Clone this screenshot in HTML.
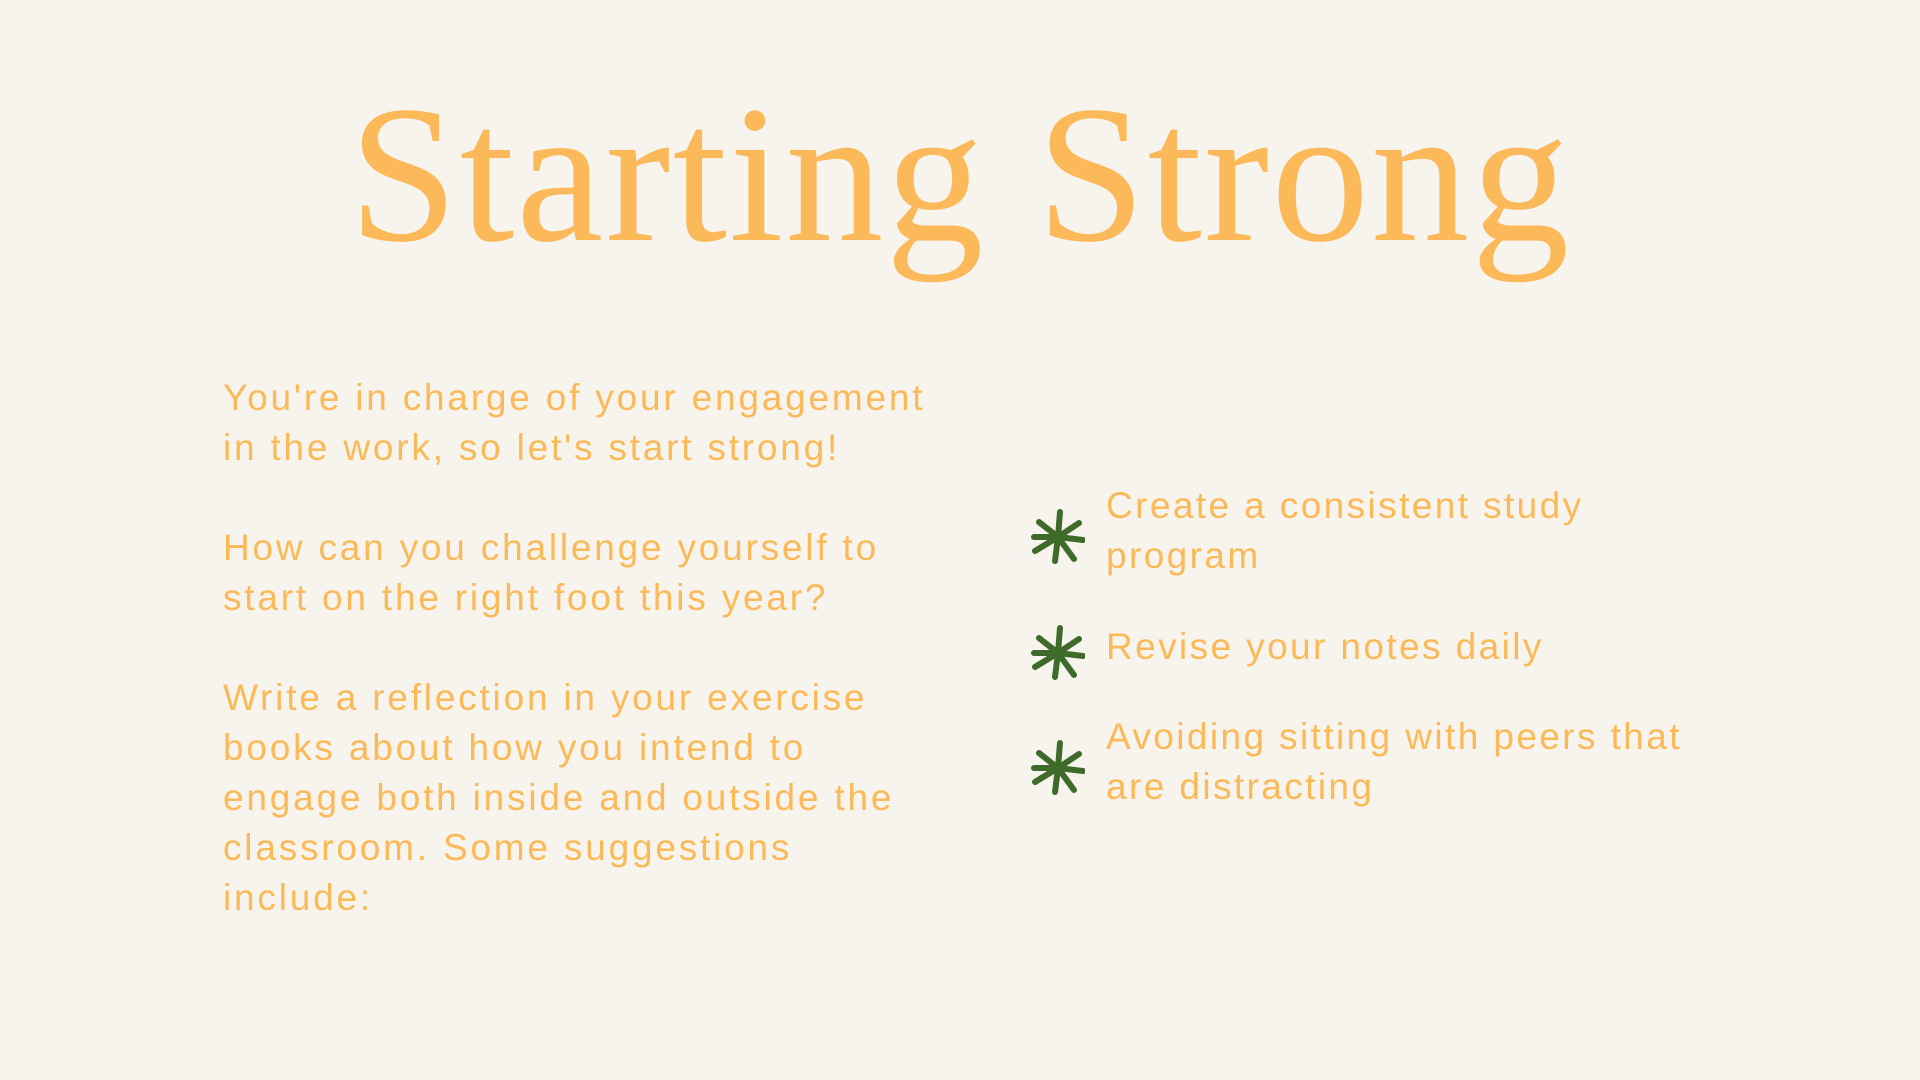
<!DOCTYPE html>
<html><head><meta charset="utf-8"><style>
html,body{margin:0;padding:0;}
body{width:1920px;height:1080px;background:#F7F4EE;position:relative;overflow:hidden;font-family:"Liberation Sans",sans-serif;color:#FBB957;}
.title{position:absolute;left:0;width:1920px;top:50px;text-align:center;font-family:"Liberation Serif",serif;font-size:196px;line-height:250px;color:#FCB95A;letter-spacing:2px;}
.left{position:absolute;left:223px;top:373px;font-size:37px;line-height:50px;white-space:nowrap;letter-spacing:2.8px;}
.item{position:absolute;left:1106px;font-size:37px;line-height:50px;white-space:nowrap;letter-spacing:2.4px;}
.star{position:absolute;width:54px;height:58px;}
</style></head><body>
<div class="title">Starting Strong</div>
<div class="left">You're in charge of your engagement<br>in the work, so let's start strong!<br><br>How can you challenge yourself to<br>start on the right foot this year?<br><br>Write a reflection in your exercise<br>books about how you intend to<br>engage both inside and outside the<br>classroom. Some suggestions<br>include:</div>

<div class="item" style="top:481px">Create a consistent study<br>program</div>
<div class="item" style="top:622px">Revise your notes daily</div>
<div class="item" style="top:712px">Avoiding sitting with peers that<br>are distracting</div>

<svg class="star" style="left:1031px;top:507px" viewBox="0 0 54 58"><g stroke="#3F6B2A" stroke-width="6" stroke-linecap="round"><line x1="27" y1="30" x2="29" y2="5"/><line x1="27" y1="30" x2="24" y2="54"/><line x1="27" y1="30" x2="8" y2="15"/><line x1="27" y1="30" x2="43" y2="52"/><line x1="27" y1="30" x2="4" y2="44"/><line x1="27" y1="30" x2="48" y2="16"/><line x1="27" y1="30" x2="3" y2="30"/><line x1="27" y1="30" x2="52" y2="33"/></g></svg>
<svg class="star" style="left:1031px;top:623px" viewBox="0 0 54 58"><g stroke="#3F6B2A" stroke-width="6" stroke-linecap="round"><line x1="27" y1="30" x2="29" y2="5"/><line x1="27" y1="30" x2="24" y2="54"/><line x1="27" y1="30" x2="8" y2="15"/><line x1="27" y1="30" x2="43" y2="52"/><line x1="27" y1="30" x2="4" y2="44"/><line x1="27" y1="30" x2="48" y2="16"/><line x1="27" y1="30" x2="3" y2="30"/><line x1="27" y1="30" x2="52" y2="33"/></g></svg>
<svg class="star" style="left:1031px;top:738px" viewBox="0 0 54 58"><g stroke="#3F6B2A" stroke-width="6" stroke-linecap="round"><line x1="27" y1="30" x2="29" y2="5"/><line x1="27" y1="30" x2="24" y2="54"/><line x1="27" y1="30" x2="8" y2="15"/><line x1="27" y1="30" x2="43" y2="52"/><line x1="27" y1="30" x2="4" y2="44"/><line x1="27" y1="30" x2="48" y2="16"/><line x1="27" y1="30" x2="3" y2="30"/><line x1="27" y1="30" x2="52" y2="33"/></g></svg>
</body></html>
